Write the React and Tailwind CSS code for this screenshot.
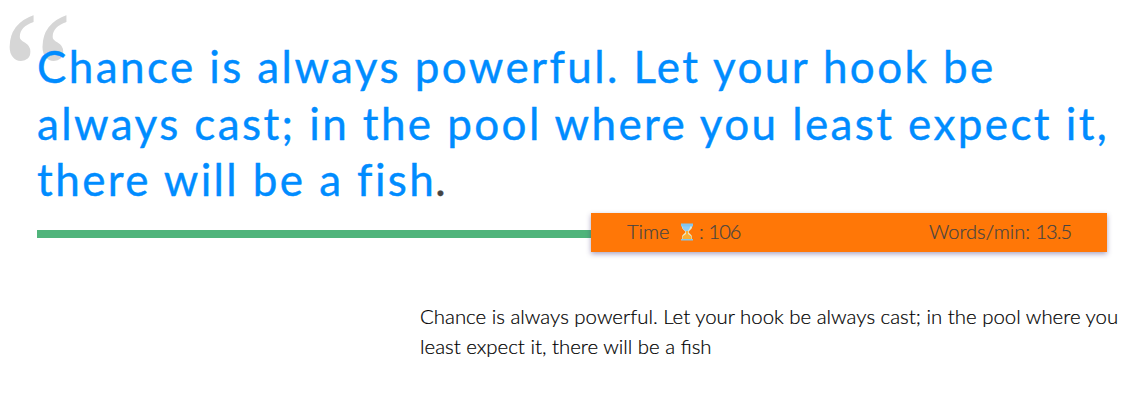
function Hourglass() {
  return (
    <svg viewBox="0 0 14 18" className="ml-[5px] mr-[5px] mt-[3px] h-[18px] w-[14px] shrink-0" aria-label="hourglass">
      <path d="M2 1.5h10v2.8c0 2-3.4 3.5-3.4 4.7s3.4 2.7 3.4 4.7v2.8H2v-2.8c0-2 3.4-3.5 3.4-4.7S2 6.3 2 4.3z" fill="#e6ead0" />
      <path d="M2.500 3h7.500v1.500c-.5 1.8-2 2.800-2.500 4.200H6C5.500 7.300 2.500 6.300 2.500 4.500z" fill="#8fcdf5" />
      <path d="M6 8h2v3l3.500 2.500v2.500h-9v-2.500L6 11z" fill="#fbb034" />
      <path d="M1 .5h12v3H1zM1 16h12v1.500H1z" fill="#83c5ee" />
    </svg>
  );
}

const lines = [
  'Chance is always powerful. Let your hook be',
  'always cast; in the pool where you least expect it,',
];

export default function App() {
  return (
    <main className="relative h-[420px] w-full overflow-hidden bg-white font-['Lato',sans-serif]">
      <span className="absolute left-[2px] top-[-15px] origin-left scale-x-[0.9] font-['Liberation_Serif',serif] text-[178px] leading-none text-[#d6d6d6]">“</span>
      <section className="relative pl-[37px] pt-[38px]">
        <blockquote className="whitespace-nowrap text-[44px] leading-[56.5px] tracking-[2.4px] text-[#008cff] [-webkit-text-stroke:0.4px]">
          {lines.map((line) => (
            <div key={line}>{line}</div>
          ))}
          <div>there will be a fish<span className="-ml-px text-[#444444]">.</span></div>
        </blockquote>
        <div className="mr-[36px] mt-[5.5px] flex items-center">
          <div className="mt-[3px] h-2 w-[554px] bg-[#50b47b]" />
          <div className="flex h-[39px] w-[516px] items-center justify-between bg-[#ff7707] px-9 pb-1 text-[20px] font-light text-[#444444] shadow-[0_2px_5px_rgba(65,50,120,0.45)] [-webkit-text-stroke:0.2px]">
            <span className="flex items-center whitespace-pre"><span>Time </span><Hourglass /><span className="tracking-[-0.3px]">: <span className="tracking-[-1px]">106</span></span></span>
            <span>Words/min: <span className="tracking-[-1px]">13.5</span></span>
          </div>
        </div>
      </section>
      <div className="ml-[420px] mt-[49px] whitespace-nowrap text-[20.42px] font-light leading-[30px] text-black [-webkit-text-stroke:0.2px]">
        <div>Chance is always powerful. Let your hook be always cast; in the pool where you</div>
        <div>least expect it, there will be a fish</div>
      </div>
    </main>
  );
}
